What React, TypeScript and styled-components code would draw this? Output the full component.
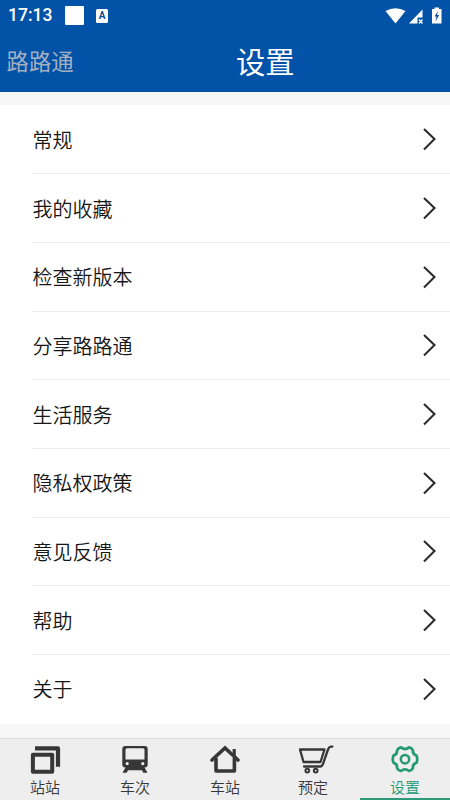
import React from "react";
import styled, { createGlobalStyle } from "styled-components";

const GlobalStyle = createGlobalStyle`
  * { box-sizing: border-box; }
  body {
    margin: 0;
    background: #f5f5f5;
    font-family: "Noto Sans CJK SC", sans-serif;
  }
`;

const Screen = styled.div`
  display: flex;
  flex-direction: column;
  width: 450px;
  height: 800px;
  overflow: hidden;
  background: #f6f6f6;
`;

const Header = styled.header`
  height: 92.4px;
  flex: none;
  background: #0252a8;
  color: #fff;
`;

const StatusBar = styled.div`
  display: flex;
  align-items: center;
  height: 31px;
  padding: 0 7px 0 8px;
`;

const Clock = styled.span`
  width: 57px;
  font: 500 17.5px/31px Roboto, sans-serif;
`;

const WhiteSquare = styled.span`
  width: 19px;
  height: 19px;
  margin-right: 12px;
  border-radius: 1px;
  background: #fff;
`;

const LetterBadge = styled.span`
  width: 12px;
  height: 14px;
  border-radius: 1.5px;
  background: #fff;
  color: #0f4c92;
  font: 700 10px/13px Roboto, sans-serif;
  text-align: center;
`;

const StatusIcons = styled.svg`
  margin-left: auto;
`;

const TitleBar = styled.div`
  display: grid;
  grid-template-columns: 236px 1fr;
  align-items: center;
  height: 59px;
`;

const BackLabel = styled.span`
  padding-left: 6.5px;
  color: #a3b0c2;
  font-size: 22.4px;
  line-height: 59px;
`;

const Title = styled.h1`
  margin: 0;
  font-size: 29.3px;
  font-weight: 400;
  line-height: 59px;
`;

const List = styled.main`
  flex: none;
  margin-top: 13.1px;
  background: #fff;
`;

const Row = styled.div`
  display: flex;
  height: 68.7px;
  padding-left: 32px;
`;

const RowContent = styled.div<{ $last: boolean }>`
  display: flex;
  flex: 1;
  align-items: center;
  justify-content: space-between;
  padding: 0 14px 0 0.5px;
  border-bottom: 1px solid ${(p) => (p.$last ? "transparent" : "#ebebeb")};
  color: #161616;
  font-size: 20px;
  font-weight: 350;
`;

const Nav = styled.nav`
  display: grid;
  grid-template-columns: repeat(5, 1fr);
  height: 62px;
  margin-top: auto;
  border-top: 1px solid #dcdcdc;
  background: #eee;
`;

const Tab = styled.div<{ $active: boolean }>`
  display: flex;
  flex-direction: column;
  align-items: center;
  padding-top: 5px;
  border-bottom: ${(p) => (p.$active ? "3px solid #2f9a78" : "0")};
  color: ${(p) => (p.$active ? "#249a72" : "#373737")};
`;

const TabLabel = styled.span<{ $shift: number }>`
  margin: 1px 0 0 ${(p) => p.$shift}px;
  font-size: 15px;
  font-weight: 350;
  line-height: 22px;
`;

const TabIcon = styled.svg`
  flex: none;
  width: 36px;
  height: 31px;
  overflow: visible;
`;

const items = ["常规", "我的收藏", "检查新版本", "分享路路通", "生活服务", "隐私权政策", "意见反馈", "帮助", "关于"];

const Chevron = () => (
  <svg width="13" height="24" viewBox="0 0 13 24" fill="none" stroke="#2b2b2b" strokeWidth="2.1">
    <path d="M1 2 11.5 12 1 22.5" />
  </svg>
);

const StackIcon = () => (
  <TabIcon viewBox="0 0 36 31" fill="none" stroke="currentColor" strokeLinejoin="round">
    <rect x="5.9" y="10.8" width="19.3" height="17" strokeWidth="4" />
    <path d="M8 4.4H31V22.7" strokeWidth="4.2" />
  </TabIcon>
);

const TrainIcon = () => (
  <TabIcon viewBox="0 0 36 31" fill="currentColor">
    <path fillRule="evenodd" d="M8.3 2H27.7Q30.7 2 30.7 5V20.5Q30.7 23.5 27.7 23.5H8.3Q5.3 23.5 5.3 20.5V5Q5.3 2 8.3 2ZM10 4.3Q8.5 4.3 8.5 5.8V15.5H27.5V5.8Q27.5 4.3 26 4.3ZM10.2 18A1.6 1.6 0 1 0 10.2 21.2A1.6 1.6 0 1 0 10.2 18ZM25.8 18A1.6 1.6 0 1 0 25.8 21.2A1.6 1.6 0 1 0 25.8 18Z" />
    <path d="M9 22.5H27L30.5 28.7H26.3L25 26.3H11L9.7 28.7H5.5Z" />
  </TabIcon>
);

const HouseIcon = () => (
  <TabIcon viewBox="0 0 36 31" fill="none" stroke="currentColor" strokeWidth="3.6">
    <path d="M5 16 18 4 31 16" strokeLinecap="round" />
    <path d="M9 14V27H27.4V14" strokeLinejoin="round" />
    <path d="M27.2 5V12" strokeWidth="3.2" />
  </TabIcon>
);

const CartIcon = () => (
  <TabIcon viewBox="0 0 36 31" fill="none" stroke="currentColor" strokeWidth="2.3" strokeLinecap="round" strokeLinejoin="round">
    <path d="M27.5 5.5H3L6.5 18H23.5Z" />
    <path d="M35.4 2.6H33.8Q32.2 2.8 31.2 5L26 20Q25 22.5 23.5 22.5H7" />
    <circle cx="10.3" cy="26.6" r="1.9" strokeWidth="2" />
    <circle cx="18.7" cy="26.6" r="1.9" strokeWidth="2" />
  </TabIcon>
);

const GearIcon = () => (
  <TabIcon viewBox="0 0 36 31" fill="none" stroke="currentColor" strokeWidth="2.7" strokeLinejoin="round">
    <path d="M14 3.4Q18 6.6 22 3.4Q24.9 4 26 6.5Q25.4 10.4 29.5 11.6Q31 15.2 29.5 18.8Q25.4 20 26 24Q24.9 26.4 22 27Q18 23.8 14 27Q11.1 26.4 10 24Q10.6 20 6.5 18.8Q5 15.2 6.5 11.6Q10.6 10.4 10 6.5Q11.1 4 14 3.4Z" />
    <circle cx="18" cy="15.2" r="4.2" strokeWidth="2.5" />
  </TabIcon>
);

const tabs = [
  { label: "站站", Icon: StackIcon, shift: 0 },
  { label: "车次", Icon: TrainIcon, shift: 0 },
  { label: "车站", Icon: HouseIcon, shift: 0 },
  { label: "预定", Icon: CartIcon, shift: -4 },
  { label: "设置", Icon: GearIcon, shift: 0 },
];

export default function App() {
  return (
    <>
      <GlobalStyle />
      <Screen>
        <Header>
          <StatusBar>
            <Clock>17:13</Clock>
            <WhiteSquare />
            <LetterBadge>A</LetterBadge>
            <StatusIcons width="58" height="20" viewBox="0 0 58 20" fill="#fff">
              <path d="M.5 5Q10.5-.5 20.5 5L10.5 17.5Z" />
              <path d="M37.5 3.5V11.5H32.5V17.5H24Z" />
              <path d="M34 13.5 37.5 17.5M37.5 13.5 34 17.5" stroke="#fff" strokeWidth="1.3" />
              <path d="M49.5 1.5H54V3H56.5V17.5H47V3H49.5Z" />
              <path d="M53 5 49.5 10.5H51.5L50.5 15.5 54.2 9H52Z" fill="#1c4e8c" />
            </StatusIcons>
          </StatusBar>
          <TitleBar>
            <BackLabel>路路通</BackLabel>
            <Title>设置</Title>
          </TitleBar>
        </Header>
        <List>
          {items.map((item, i) => (
            <Row key={item}>
              <RowContent $last={i === items.length - 1}>
                <span>{item}</span>
                <Chevron />
              </RowContent>
            </Row>
          ))}
        </List>
        <Nav>
          {tabs.map(({ label, Icon, shift }, i) => (
            <Tab key={label} $active={i === tabs.length - 1}>
              <Icon />
              <TabLabel $shift={shift}>{label}</TabLabel>
            </Tab>
          ))}
        </Nav>
      </Screen>
    </>
  );
}
